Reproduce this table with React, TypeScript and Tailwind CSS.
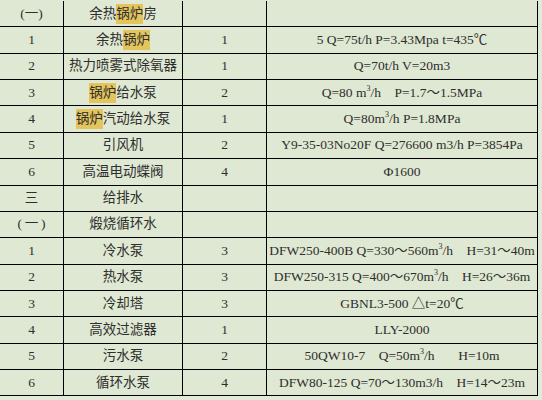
import React from "react"

type Row = [string, React.ReactNode, string, React.ReactNode]

function Hl({ children }: { children: React.ReactNode }) {
  return <span className="bg-[#e4c45c]">{children}</span>
}

function M3() {
  return (
    <>
      m<sup className="text-[8px]">3</sup>
    </>
  )
}

const rows: Row[] = [
  ["(一)", <>余热<Hl>锅炉</Hl>房</>, "", ""],
  ["1", <>余热<Hl>锅炉</Hl></>, "1", "5 Q=75t/h P=3.43Mpa t=435℃"],
  ["2", "热力喷雾式除氧器", "1", "Q=70t/h V=20m3"],
  ["3", <><Hl>锅炉</Hl>给水泵</>, "2", <>Q=80 <M3 />/h{"    "}P=1.7～1.5MPa</>],
  ["4", <><Hl>锅炉</Hl>汽动给水泵</>, "1", <>Q=80<M3 />/h P=1.8MPa</>],
  ["5", "引风机", "2", "Y9-35-03No20F Q=276600 m3/h P=3854Pa"],
  ["6", "高温电动蝶阀", "4", "Φ1600"],
  ["三", "给排水", "", ""],
  ["(\u2009一\u2009)", "煅烧循环水", "", ""],
  ["1", "冷水泵", "3", <>DFW250-400B Q=330～560<M3 />/h{"    "}H=31～40m</>],
  ["2", "热水泵", "3", <>DFW250-315 Q=400～670<M3 />/h{"    "}H=26～36m</>],
  ["3", "冷却塔", "3", "GBNL3-500 △t=20℃"],
  ["4", "高效过滤器", "1", "LLY-2000"],
  ["5", "污水泵", "2", <>50QW10-7{"    "}Q=50<M3 />/h{"       "}H=10m</>],
  ["6", "循环水泵", "4", <>DFW80-125 Q=70～130m3/h{"    "}H=14～23m</>],
]

export default function App() {
  return (
    <div
      className="w-[542px] h-[400px] overflow-hidden bg-[#e2e9d8] pt-px text-[13.5px] text-[#2e2e2e]"
      style={{ fontFamily: '"Liberation Serif", "Noto Sans CJK SC", serif' }}
    >
      <div className="w-[538px] bg-[#dfe8d2]">
        {rows.map((r, i) => (
          <div
            key={i}
            className="grid grid-cols-[64px_119px_84px_271px] h-[26.36px] border-b border-black"
          >
            <div className="border-r border-black flex items-center justify-center whitespace-pre">{r[0]}</div>
            <div className="border-r border-black flex items-center justify-center whitespace-pre">{r[1]}</div>
            <div className="border-r border-black flex items-center justify-center whitespace-pre">{r[2]}</div>
            <div className="border-r border-black flex items-center justify-center whitespace-pre">{r[3]}</div>
          </div>
        ))}
      </div>
    </div>
  )
}
